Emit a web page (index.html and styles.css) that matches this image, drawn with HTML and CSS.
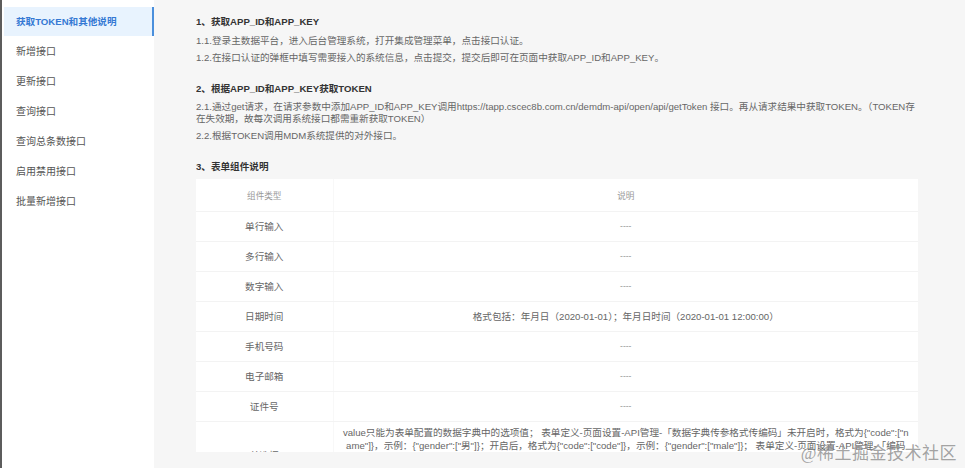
FILE: index.html
```html
<!DOCTYPE html>
<html lang="zh-CN">
<head>
<meta charset="utf-8">
<title>接口说明</title>
<link rel="stylesheet" href="styles.css">
</head>
<body>
<div class="app">
  <div class="edge"></div>
  <nav class="sidebar">
    <div class="nav-item active">获取TOKEN和其他说明</div>
    <div class="nav-item">新增接口</div>
    <div class="nav-item">更新接口</div>
    <div class="nav-item">查询接口</div>
    <div class="nav-item">查询总条数接口</div>
    <div class="nav-item">启用禁用接口</div>
    <div class="nav-item">批量新增接口</div>
  </nav>
  <main class="main">
    <div class="scroll">
      <section class="sec first">
        <h3 class="sec-title">1、获取APP_ID和APP_KEY</h3>
        <p class="txt">1.1.登录主数据平台，进入后台管理系统，打开集成管理菜单，点击接口认证。</p>
        <p class="txt">1.2.在接口认证的弹框中填写需要接入的系统信息，点击提交，提交后即可在页面中获取APP_ID和APP_KEY。</p>
      </section>
      <section class="sec">
        <h3 class="sec-title">2、根据APP_ID和APP_KEY获取TOKEN</h3>
        <p class="txt">2.1.通过get请求，在请求参数中添加APP_ID和APP_KEY调用https://tapp.cscec8b.com.cn/demdm-api/open/api/getToken 接口。再从请求结果中获取TOKEN。（TOKEN存在失效期，故每次调用系统接口都需重新获取TOKEN）</p>
        <p class="txt">2.2.根据TOKEN调用MDM系统提供的对外接口。</p>
      </section>
      <section class="sec">
        <h3 class="sec-title">3、表单组件说明</h3>
        <table class="tbl">
          <thead>
            <tr><th class="c1">组件类型</th><th class="c2">说明</th></tr>
          </thead>
          <tbody>
            <tr><td class="c1">单行输入</td><td class="c2 dash">----</td></tr>
            <tr><td class="c1">多行输入</td><td class="c2 dash">----</td></tr>
            <tr><td class="c1">数字输入</td><td class="c2 dash">----</td></tr>
            <tr><td class="c1">日期时间</td><td class="c2">格式包括：年月日（2020-01-01）；年月日时间（2020-01-01 12:00:00）</td></tr>
            <tr><td class="c1">手机号码</td><td class="c2 dash">----</td></tr>
            <tr><td class="c1">电子邮箱</td><td class="c2 dash">----</td></tr>
            <tr><td class="c1">证件号</td><td class="c2 dash">----</td></tr>
            <tr class="tall"><td class="c1">单选框</td><td class="c2 long">value只能为表单配置的数据字典中的选项值； 表单定义-页面设置-API管理-「数据字典传参格式传编码」未开启时，格式为{"code":["name"]}，示例：{"gender":["男"]}；开启后，格式为{"code":["code"]}，示例：{"gender":["male"]}； 表单定义-页面设置-API管理-「编码传参」开启时，格式为{"code":"code"}，示例：{"gender":"male"}</td></tr>
          </tbody>
        </table>
      </section>
    </div>
  </main>
  <div class="watermark">@稀土掘金技术社区</div>
</div>
</body>
</html>
```

FILE: styles.css
```css
* { box-sizing: border-box; }
html, body {
  margin: 0;
  padding: 0;
  height: 100%;
  overflow: hidden;
}
body {
  font-family: "Liberation Sans", "Noto Sans CJK SC", sans-serif;
  font-size: 9.6px;
  color: #666;
  background: #f6f6f6;
}
.app {
  display: flex;
  height: 468px;
  position: relative;
}
.edge {
  width: 2px;
  background: #5c5c5c;
  flex: none;
}
.sidebar {
  width: 152px;
  flex: none;
  background: #fff;
  padding: 7px 0 0 2px;
}
.nav-item {
  height: 30px;
  line-height: 30px;
  padding-left: 12px;
  font-size: 10px;
  color: #555;
  white-space: nowrap;
}
.nav-item.active {
  background: #e8f3fe;
  color: #3579d4;
  font-weight: bold;
  font-size: 9.6px;
  border-right: 2px solid #4a8fdc;
  height: 29px;
  line-height: 29px;
  margin-bottom: 1px;
}
.main {
  flex: 1;
  min-width: 0;
  background: #f6f6f6;
  padding: 0 44px 16px 42px;
  height: 468px;
}
.scroll {
  height: 100%;
  overflow: hidden;
  padding-top: 16px;
}
.sec { margin-bottom: 19px; }
.sec:last-child { margin-bottom: 0; }
.sec-title {
  margin: 0 0 6px;
  font-size: 9.6px;
  line-height: 12px;
  font-weight: bold;
  color: #333;
}
.sec.first .sec-title { margin-bottom: 7px; }
.txt {
  margin: 0 0 5px;
  line-height: 12px;
  color: #666;
}
.txt:last-child { margin-bottom: 0; }
.tbl {
  width: 722px;
  border-collapse: collapse;
  background: #fff;
  table-layout: fixed;
  margin-top: 1px;
}
.tbl th, .tbl td {
  text-align: center;
  font-weight: normal;
  border-bottom: 1px solid #f3f3f3;
  padding: 0 8px;
}
.tbl th {
  height: 32px;
  font-size: 8.6px;
  color: #999;
}
.tbl td {
  height: 30px;
  color: #666;
}
.tbl .c1 {
  width: 137px;
  border-right: 1px solid #f8f8f8;
}
.tbl td.dash {
  color: #999;
  font-size: 8.6px;
}
.tbl .tall td { height: 68px; }
.tbl td.long {
  line-height: 13px;
  padding: 4px 8px;
  word-break: break-all;
  vertical-align: top;
}
.watermark {
  position: absolute;
  right: 8px;
  bottom: 4px;
  font-family: "Liberation Serif", "Noto Sans CJK SC", serif;
  font-size: 17px;
  color: rgba(140, 140, 140, 0.8);
  letter-spacing: 0.5px;
  pointer-events: none;
}
```
